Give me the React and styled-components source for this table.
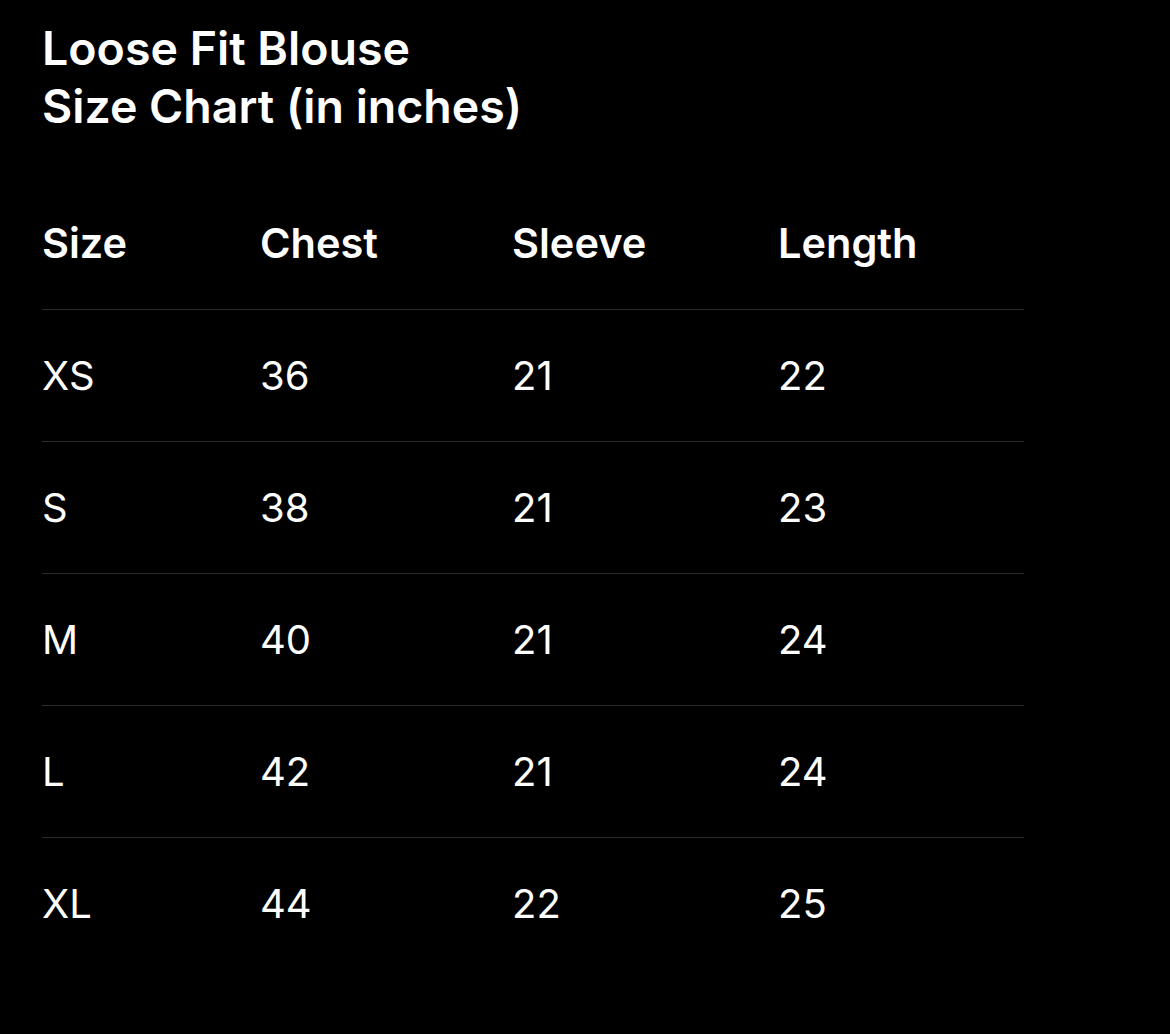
import styled, { createGlobalStyle } from "styled-components"

const sizes = [
    { size: "XS", chest: 36, sleeve: 21, length: 22 },
    { size: "S", chest: 38, sleeve: 21, length: 23 },
    { size: "M", chest: 40, sleeve: 21, length: 24 },
    { size: "L", chest: 42, sleeve: 21, length: 24 },
    { size: "XL", chest: 44, sleeve: 22, length: 25 },
]

function App() {
    return (
        <>
            <GlobalStyle />
            <Page>
                <Title>
                    Loose Fit Blouse
                    <br />
                    Size Chart (in inches)
                </Title>
                <Table>
                    <Row>
                        <HeadCell>Size</HeadCell>
                        <HeadCell>Chest</HeadCell>
                        <HeadCell>Sleeve</HeadCell>
                        <HeadCell>Length</HeadCell>
                    </Row>
                    {sizes.map((s) => (
                        <Row key={s.size}>
                            <Cell>{s.size}</Cell>
                            <Cell>{s.chest}</Cell>
                            <Cell>{s.sleeve}</Cell>
                            <Cell>{s.length}</Cell>
                        </Row>
                    ))}
                </Table>
            </Page>
        </>
    )
}

export default App

const GlobalStyle = createGlobalStyle`
    html, body {
        margin: 0;
        background: #000;
    }
    body {
        font-family: Inter, "Liberation Sans", sans-serif;
        color: #fff;
    }
`

const Page = styled.div`
    width: 1170px;
    height: 1034px;
    box-sizing: border-box;
    padding: 19px 0 0 42px;
    background: #000;
`

const Title = styled.h1`
    margin: 0;
    font-size: 46.5px;
    line-height: 58px;
    font-weight: 600;
    letter-spacing: 0;
`

const Table = styled.div`
    width: 982px;
    margin-top: 42px;
    display: flex;
    flex-direction: column;
`

const Row = styled.div`
    display: grid;
    grid-template-columns: 218px 252px 266px 1fr;
    align-items: center;
    height: 132px;
    box-sizing: border-box;
    & + & {
        border-top: 1.5px solid #2b2b2b;
    }
`

const HeadCell = styled.div`
    font-size: 41.5px;
    font-weight: 600;
    letter-spacing: 0;
`

const Cell = styled.div`
    font-size: 40px;
    font-weight: 400;
    letter-spacing: 0;
`
